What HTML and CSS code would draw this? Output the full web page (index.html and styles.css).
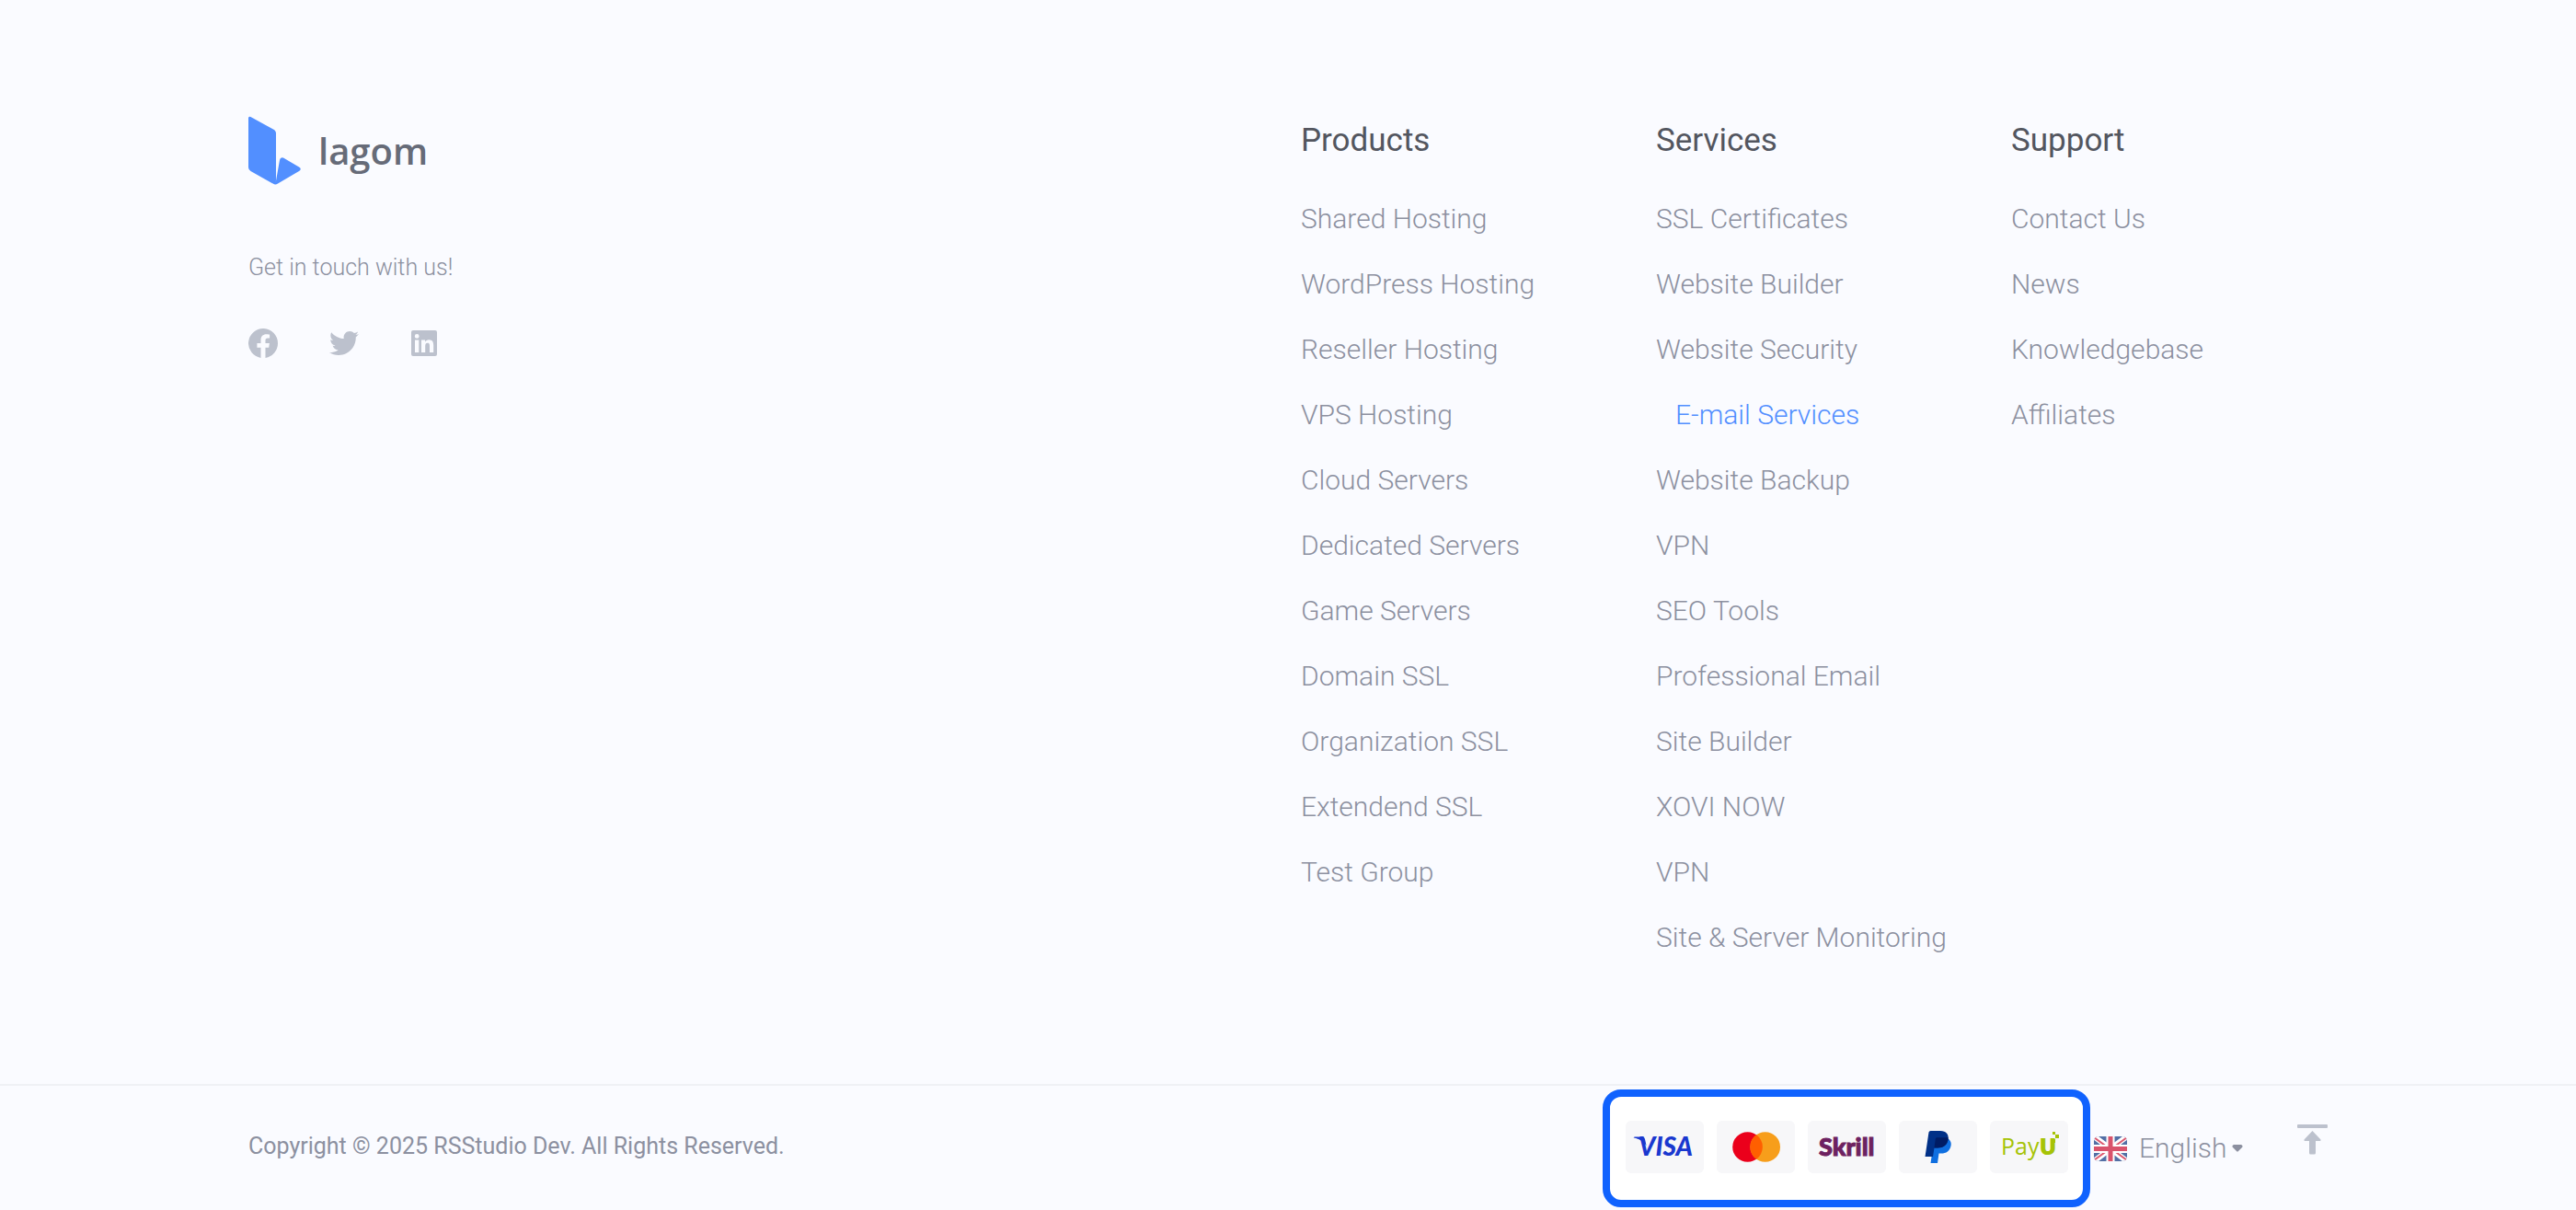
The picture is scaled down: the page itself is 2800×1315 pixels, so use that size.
FILE: index.html
```html
<!DOCTYPE html>
<html lang="en">
<head>
<meta charset="utf-8">
<meta name="viewport" content="width=device-width, initial-scale=1">
<title>Lagom</title>
<link rel="stylesheet" href="styles.css">
</head>
<body>
<footer class="footer">
  <div class="container footer-main">
    <div class="brand">
      <a class="logo" href="#" aria-label="lagom">
        <svg class="logo-mark" viewBox="0 0 57 75" aria-hidden="true">
          <path d="M0 2.500Q0 0 2.400 1L27 14.500Q30 16 30 19V70Q29.500 75 26 73.300L2.500 60Q0 58.500 0 56Z"/>
          <path d="M34 48Q34.500 44.500 38 45.500L55 55.500Q58.500 57.500 55 60L32 73.500Q29 75.500 27 73.500L30 70.500Z"/>
        </svg>
        <span class="logo-text">lagom</span>
      </a>
      <p class="touch">Get in touch with us!</p>
      <div class="social">
        <a href="#" aria-label="Facebook"><svg viewBox="0 0 32 32"><path d="M32 16.100A16 16 0 1 0 13.500 31.900V20.700H9.400V16.100H13.500V12.500C13.500 8.500 15.900 6.300 19.500 6.300C21.300 6.300 23.100 6.600 23.100 6.600V10.500H21.100C19.100 10.500 18.500 11.800 18.500 13V16.100H22.900L22.200 20.700H18.500V31.900A16 16 0 0 0 32 16.100Z"/></svg></a>
        <a href="#" aria-label="Twitter"><svg viewBox="0 0 512 512"><path d="M459.400 151.700c.3 4.500.3 9.100.3 13.600 0 138.700-105.600 298.600-298.600 298.600-59.500 0-114.700-17.200-161.100-47.100 8.400 1 16.600 1.300 25.300 1.300 49.100 0 94.200-16.600 130.300-44.800-46.100-1-84.800-31.200-98.100-72.800 6.500 1 13 1.600 19.800 1.600 9.400 0 18.800-1.300 27.600-3.600-48.100-9.700-84.100-52-84.100-103v-1.300c14 7.800 30.200 12.700 47.400 13.300-28.300-18.800-46.800-51-46.800-87.400 0-19.500 5.200-37.400 14.300-53 51.700 63.700 129.300 105.300 216.400 109.800-1.600-7.800-2.600-15.900-2.600-24 0-57.800 46.800-104.900 104.900-104.900 30.200 0 57.500 12.700 76.700 33.100 23.700-4.500 46.500-13.300 66.600-25.300-7.800 24.400-24.400 44.800-46.100 57.800 21.100-2.300 41.600-8.100 60.400-16.200-14.300 20.800-32.200 39.300-52.600 54.300z"/></svg></a>
        <a href="#" aria-label="LinkedIn"><svg viewBox="0 0 32 32"><path fill-rule="evenodd" d="M3 2H27Q29 2 29 4V28Q29 30 27 30H3Q1 30 1 28V4Q1 2 3 2ZM5 12.600V26H9.300V12.600ZM7.200 6A2.400 2.400 0 1 0 7.200 10.800A2.400 2.400 0 1 0 7.200 6ZM12 12.600V26H16.200V19.400C16.200 17.500 16.600 15.800 18.800 15.800C21 15.800 21 17.900 21 19.500V26H25.200V18.700C25.200 15.100 24.400 12.300 20.200 12.300C18.200 12.300 16.800 13.400 16.200 14.500H16.100V12.600Z"/></svg></a>
      </div>
    </div>
    <nav class="columns" aria-label="Footer">
      <section>
        <h2>Products</h2>
        <ul class="links">
          <li><a href="#">Shared Hosting</a></li>
          <li><a href="#">WordPress Hosting</a></li>
          <li><a href="#">Reseller Hosting</a></li>
          <li><a href="#">VPS Hosting</a></li>
          <li><a href="#">Cloud Servers</a></li>
          <li><a href="#">Dedicated Servers</a></li>
          <li><a href="#">Game Servers</a></li>
          <li><a href="#">Domain SSL</a></li>
          <li><a href="#">Organization SSL</a></li>
          <li><a href="#">Extendend SSL</a></li>
          <li><a href="#">Test Group</a></li>
        </ul>
      </section>
      <section>
        <h2>Services</h2>
        <ul class="links">
          <li><a href="#">SSL Certificates</a></li>
          <li><a href="#">Website Builder</a></li>
          <li><a href="#">Website Security</a></li>
          <li><a class="active" href="#">E-mail Services</a></li>
          <li><a href="#">Website Backup</a></li>
          <li><a href="#">VPN</a></li>
          <li><a href="#">SEO Tools</a></li>
          <li><a href="#">Professional Email</a></li>
          <li><a href="#">Site Builder</a></li>
          <li><a href="#">XOVI NOW</a></li>
          <li><a href="#">VPN</a></li>
          <li><a href="#">Site &amp; Server Monitoring</a></li>
        </ul>
      </section>
      <section>
        <h2>Support</h2>
        <ul class="links">
          <li><a href="#">Contact Us</a></li>
          <li><a href="#">News</a></li>
          <li><a href="#">Knowledgebase</a></li>
          <li><a href="#">Affiliates</a></li>
        </ul>
      </section>
    </nav>
  </div>
  <div class="footer-bottom">
    <div class="container bottom-row">
      <p class="copyright">Copyright © 2025 RSStudio Dev. All Rights Reserved.</p>
      <ul class="payments" aria-label="Payment methods">
        <li>
          <svg viewBox="0 0 85 57" role="img" aria-label="Visa">
            <path d="M9 18.500Q8 17.500 10 17.500H18Q20.500 17.500 21 20L22.500 27Q18 20 9 18.500Z" fill="#1a38cf"/>
            <text class="visa" x="14" y="38">VISA</text>
          </svg>
        </li>
        <li>
          <svg viewBox="0 0 85 57" role="img" aria-label="Mastercard">
            <circle cx="33.500" cy="28.500" r="16.300" fill="#eb001b"/>
            <circle cx="52.700" cy="28.500" r="16.300" fill="#f79e1b"/>
            <path d="M43.100 15.300A16.300 16.300 0 0 1 43.100 41.700A16.300 16.300 0 0 1 43.100 15.300Z" fill="#ff5f00"/>
          </svg>
        </li>
        <li>
          <svg viewBox="0 0 85 57" role="img" aria-label="Skrill">
            <text class="skrill" x="12" y="38">Skrill</text>
          </svg>
        </li>
        <li>
          <svg viewBox="0 0 85 57" role="img" aria-label="PayPal">
            <path d="M40 18.500H50C55 19 57.500 23 56.600 27C55.500 33 51.500 35.500 46 35.500H43.500L42 46H34.500L38.500 19.500Z" fill="#0f6fe0"/>
            <path d="M34.500 11H45C51.500 11 54.500 15 53.600 20.500C52.500 26.500 48 29.500 42 29.500H38.500L37 39H28.500L32.500 12.500Q32.700 11 34.500 11Z" fill="#003087"/>
            <path d="M41 18.300H53.500V20.500C52.500 26.500 48 29.500 42 29.500H38.500L39.700 20Q40 18.300 41 18.300Z" fill="#001c64"/>
          </svg>
        </li>
        <li>
          <svg viewBox="0 0 85 57" role="img" aria-label="PayU">
            <text class="payu" x="12" y="37">Pay<tspan class="payu-u">U</tspan></text>
            <path d="M67 20H71V24H67ZM71 15H75V19H71ZM68 12H71V15H68Z" fill="#a6c307"/>
          </svg>
        </li>
      </ul>
      <label class="language">
        <svg class="flag" viewBox="0 0 36 27" aria-hidden="true">
          <defs><clipPath id="flag-shape"><rect width="36" height="27" rx="5"/></clipPath></defs>
          <g clip-path="url(#flag-shape)">
            <path fill="#536fa5" d="M0 0H36V27H0Z"/>
            <path stroke="#fff" stroke-width="6" d="M0 0L36 27M36 0L0 27"/>
            <path stroke="#dc5a70" stroke-width="2" d="M0 1L15 12M36 1L21 12M0 26L15 15M36 26L21 15"/>
            <path stroke="#fff" stroke-width="9" d="M18 0V27M0 13.500H36"/>
            <path stroke="#d9536c" stroke-width="5" d="M18 0V27M0 13.500H36"/>
          </g>
        </svg>
        <select class="language-select" aria-label="Language"><option>English</option></select>
        <svg class="caret" viewBox="0 0 12 8" aria-hidden="true"><path d="M2 0H10Q12.500 1 11 3L7 7Q6 8 5 7L1 3Q-.5 1 2 0Z"/></svg>
      </label>
      <a class="to-top" href="#" aria-label="Back to top">
        <svg viewBox="0 0 33 33"><path d="M1 0H32Q33 0 33 1V3Q33 4 32 4H1Q0 4 0 3V1Q0 0 1 0ZM16.500 7L25.500 16.500Q26 18 24.500 18H20V31Q20 32.500 18.500 32.500H14.500Q13 32.500 13 31V18H8.500Q7 18 7.500 16.500Z"/></svg>
      </a>
    </div>
  </div>
</footer>
</body>
</html>
```

FILE: styles.css
```css
* {
  box-sizing: border-box;
}

body {
  margin: 0;
  background: #fafbff;
  color: #8c90a0;
  font-family: Roboto, "Liberation Sans", sans-serif;
  font-weight: 300;
}

h2,
p,
ul {
  margin: 0;
  padding: 0;
}

ul {
  list-style: none;
}

a {
  color: inherit;
  text-decoration: none;
}

svg {
  display: block;
}

.container {
  max-width: 2320px;
  margin: 0 auto;
  padding: 0 30px;
}

.footer-main {
  display: grid;
  grid-template-columns: minmax(0, 1144fr) minmax(0, 1116fr);
  padding-top: 126px;
  padding-bottom: 124px;
}

.logo {
  display: inline-flex;
  gap: 19px;
}

.logo-mark {
  width: 57px;
  height: 75px;
  fill: #528fff;
}

.logo-text {
  color: #666b78;
  font: 600 40px/75px "Open Sans", "Noto Sans", sans-serif;
}

.touch {
  margin-top: 70px;
  font-size: 25px;
  line-height: 32px;
}

.social {
  display: flex;
  gap: 56px;
  margin-top: 50px;
}

.social svg {
  width: 32px;
  height: 32px;
  fill: #bcc1cd;
}

.columns {
  display: grid;
  grid-template-columns: repeat(3, minmax(0, 1fr));
  gap: 42px;
  padding-top: 7px;
}

.columns h2 {
  margin-bottom: 29px;
  color: #53565f;
  font-size: 35px;
  font-weight: 400;
  line-height: 40px;
}

.links {
  font-size: 30px;
  line-height: 71px;
  white-space: nowrap;
}

.links .active {
  padding-left: 21px;
  color: #528fff;
}

.footer-bottom {
  border-top: 2px solid #eff1f5;
}

.bottom-row {
  display: flex;
  align-items: center;
  padding-top: 4px;
  padding-bottom: 2px;
}

.copyright {
  margin-right: auto;
  padding-bottom: 4px;
  font-size: 25px;
  font-weight: 400;
  line-height: 32px;
}

.payments {
  display: flex;
  gap: 14px;
  padding: 26px 16px 29px 17px;
  border: 8px solid #1062fe;
  border-radius: 20px;
  background: #fff;
}

.payments svg {
  width: 85px;
  height: 57px;
  border-radius: 6px;
  background: #f7f7f9;
}

.visa {
  fill: #1a38cf;
  font: italic 900 28px Lato, sans-serif;
}

.skrill {
  fill: #6d2160;
  stroke: #6d2160;
  stroke-width: 1px;
  font: 900 27px Lato, sans-serif;
}

.payu {
  fill: #a6c307;
  font: 400 25px "Open Sans", sans-serif;
}

.payu-u {
  font-weight: 800;
}

.language {
  display: flex;
  align-items: center;
  margin-left: 4px;
}

.flag {
  width: 36px;
  height: 27px;
  margin-right: 13px;
}

.language-select {
  padding: 0;
  border: 0;
  appearance: none;
  background: none;
  color: inherit;
  font: inherit;
  font-size: 30px;
  line-height: 40px;
}

.caret {
  width: 12px;
  height: 8px;
  margin-left: 5px;
  fill: #8c90a0;
}

.to-top {
  margin-left: 59px;
  padding-bottom: 20px;
}

.to-top svg {
  width: 33px;
  height: 33px;
  fill: #bcc1cd;
}
```
